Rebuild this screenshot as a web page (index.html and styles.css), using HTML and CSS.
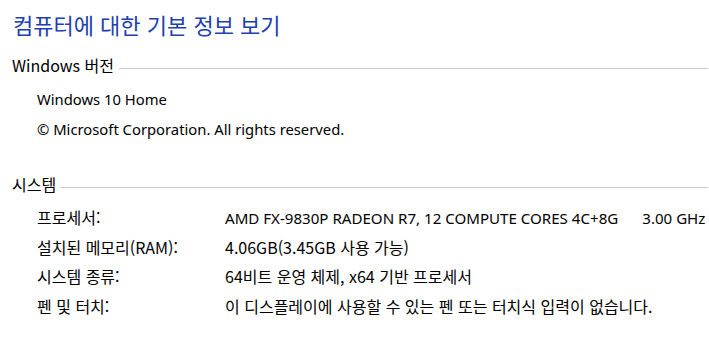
FILE: index.html
```html
<!DOCTYPE html>
<html lang="ko">
<head>
    <meta charset="UTF-8">
    <title>시스템</title>
    <link rel="stylesheet" href="styles.css">
</head>
<body>
    <h1 class="title">컴퓨터에 대한 기본 정보 보기</h1>

    <div class="group-head">
        <span>Windows 버전</span>
        <div class="rule"></div>
    </div>
    <div class="group">
        <div class="line latin">Windows 10 Home</div>
        <div class="line latin">© Microsoft Corporation. All rights reserved.</div>
    </div>

    <div class="group-head sys">
        <span>시스템</span>
        <div class="rule"></div>
    </div>
    <div class="group">
        <div class="row">
            <div class="label">프로세서:</div>
            <div class="value latin cpu">AMD FX-9830P RADEON R7, 12 COMPUTE CORES 4C+8G<span class="speed">3.00 GHz</span></div>
        </div>
        <div class="row">
            <div class="label">설치된 메모리(RAM):</div>
            <div class="value">4.06GB(3.45GB 사용 가능)</div>
        </div>
        <div class="row">
            <div class="label">시스템 종류:</div>
            <div class="value">64비트 운영 체제, x64 기반 프로세서</div>
        </div>
        <div class="row">
            <div class="label">펜 및 터치:</div>
            <div class="value">이 디스플레이에 사용할 수 있는 펜 또는 터치식 입력이 없습니다.</div>
        </div>
    </div>
</body>
</html>
```

FILE: styles.css
```css
body {
    margin: 0;
    padding: 0 1px 0 12px;
    font-family: "Noto Sans CJK KR", "Noto Sans", sans-serif;
    font-size: 16px;
    color: #000;
    background: #fff;
}
.latin {
    font-family: "Noto Sans", "Noto Sans CJK KR", sans-serif;
    font-size: 14.8px;
}
.latin.cpu {
    font-size: 15.1px;
}
.title {
    margin: 0;
    height: 46px;
    line-height: 48px;
    padding-left: 1px;
    font-size: 22px;
    font-weight: normal;
    color: #1c40b0;
}
.group-head {
    display: flex;
    align-items: center;
    height: 38px;
}
.group-head .rule {
    flex: 1;
    height: 1px;
    margin: 6px 0 0 5px;
    background: #cccccc;
}
.group-head.sys {
    margin-top: 21px;
}
.group {
    padding-left: 25px;
}
.line {
    height: 30px;
    line-height: 30px;
}
.row {
    display: flex;
    align-items: baseline;
    height: 29.5px;
    line-height: 29.5px;
}
.label {
    flex-shrink: 0;
    width: 188px;
}
.value {
    white-space: nowrap;
}
.speed {
    margin-left: 24px;
}
```
